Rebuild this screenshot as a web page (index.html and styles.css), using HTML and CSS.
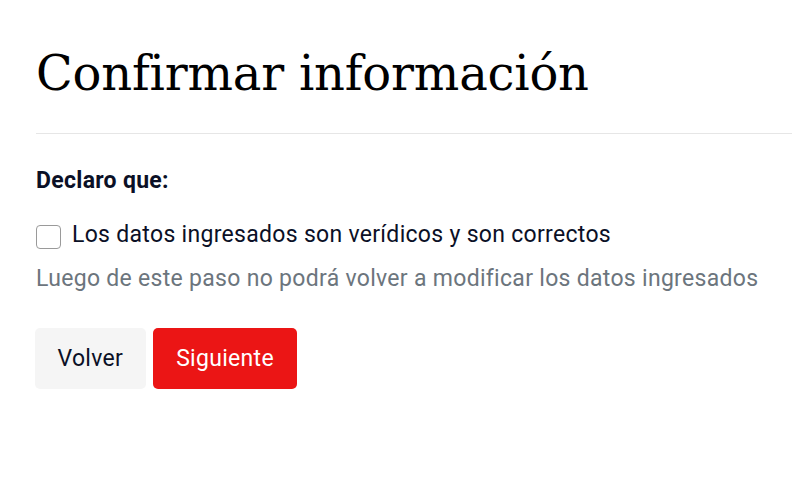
FILE: index.html
```html
<!DOCTYPE html>
<html lang="es">
<head>
<meta charset="utf-8">
<title>Confirmar información</title>
<link rel="stylesheet" href="styles.css">
</head>
<body>
<main class="page">
  <h1 class="title">Confirmar información</h1>
  <hr class="divider">
  <section class="declare">
    <p class="declare-label">Declaro que:</p>
    <label class="check-row">
      <input type="checkbox" class="check-input">
      <span class="check-box"></span>
      <span class="check-text">Los datos ingresados son verídicos y son correctos</span>
    </label>
    <p class="hint">Luego de este paso no podrá volver a modificar los datos ingresados</p>
  </section>
  <div class="actions">
    <button class="btn btn-secondary" type="button">Volver</button>
    <button class="btn btn-primary" type="button">Siguiente</button>
  </div>
</main>
</body>
</html>
```
FILE: styles.css
```css
html, body {
  margin: 0;
  padding: 0;
  background: #ffffff;
}

body {
  font-family: Roboto, "Liberation Sans", sans-serif;
  color: #0b1026;
}

.page {
  padding: 37px 0 0 36px;
}

.title {
  margin: 0;
  font-family: "DejaVu Serif", "Liberation Serif", serif;
  font-weight: 400;
  font-size: 48px;
  letter-spacing: -0.2px;
  line-height: 72px;
  color: #000000;
}

.divider {
  margin: 24px 0 0 0;
  border: 0;
  border-top: 1px solid #e6e6e6;
  height: 0;
}

.declare {
  padding-top: 33px;
}

.declare-label {
  margin: 0;
  font-size: 23px;
  letter-spacing: 0.3px;
  font-weight: 700;
  line-height: 28px;
}

.check-row {
  margin-top: 26px;
  display: flex;
  align-items: flex-start;
  gap: 11px;
  cursor: pointer;
}

.check-input {
  position: absolute;
  opacity: 0;
  width: 0;
  height: 0;
}

.check-box {
  margin-top: 4px;
  width: 23px;
  height: 22px;
  border: 1px solid #9a9a9a;
  border-radius: 4px;
  background: #ffffff;
  flex: none;
}

.check-text {
  font-size: 23px;
  letter-spacing: 0.3px;
  line-height: 28px;
}

.hint {
  margin: 16px 0 0 0;
  font-size: 23px;
  letter-spacing: 0.3px;
  line-height: 28px;
  color: #6c757d;
}

.actions {
  margin-top: 35px;
  margin-left: -1px;
  display: flex;
  gap: 7px;
}

.btn {
  font-family: Roboto, "Liberation Sans", sans-serif;
  font-size: 23px;
  letter-spacing: 0.3px;
  height: 61px;
  border: 0;
  border-radius: 5px;
  padding: 0 23px;
  cursor: pointer;
}

.btn-secondary {
  padding: 0 22.5px;
  background: #f5f5f5;
  color: #0b1026;
}

.btn-primary {
  padding: 0 23.5px;
  background: #eb1515;
  color: #ffffff;
}
```
